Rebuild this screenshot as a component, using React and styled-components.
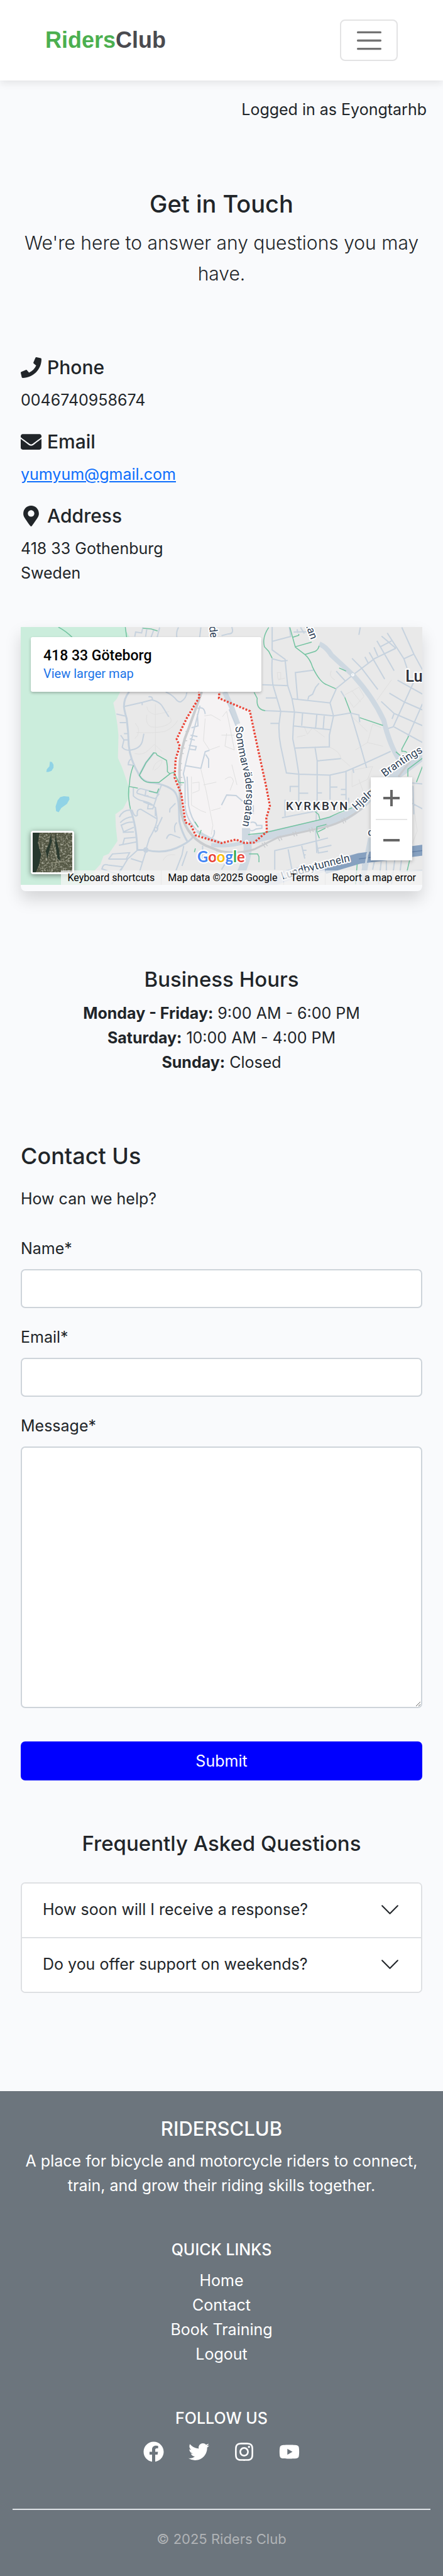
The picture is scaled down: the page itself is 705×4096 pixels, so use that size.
import React from "react";
import styled, { createGlobalStyle } from "styled-components";
import {
  FaPhone,
  FaEnvelope,
  FaMapMarkerAlt,
  FaFacebook,
  FaTwitter,
  FaInstagram,
  FaYoutube,
} from "react-icons/fa";

const GlobalStyle = createGlobalStyle`
  *, *::before, *::after { box-sizing: border-box; }
  body {
    margin: 0;
    background: #f9fafc;
    color: #212529;
    font-family: Inter, "Liberation Sans", sans-serif;
    font-size: 25px;
    line-height: 39px;
  }
  h1, h2, h3, h4, p, address, ul { margin: 0; padding: 0; font-style: normal; }
  button, input, textarea { font: inherit; color: inherit; }
`;

/* ---------- Header ---------- */

const Header = styled.header`
  display: flex;
  align-items: center;
  justify-content: space-between;
  height: 128px;
  padding: 0 72px 0 72px;
  background: #fff;
  box-shadow: 0 3px 13px rgba(0, 0, 0, 0.1);
`;

const Brand = styled.a`
  font-family: "Liberation Sans", Arial, sans-serif;
  font-size: 36px;
  line-height: 54px;
  font-weight: 700;
  color: #4a4a4f;
  text-decoration: none;

  span { color: #4caf50; }
`;

const MenuButton = styled.button`
  display: flex;
  align-items: center;
  justify-content: center;
  width: 92px;
  height: 66px;
  padding: 0;
  background: transparent;
  border: 2px solid #e3e3e4;
  border-radius: 8px;
`;

const LoginStatus = styled.p`
  padding: 27px 26px;
  text-align: right;
`;

/* ---------- Page sections ---------- */

const Main = styled.main`
  padding: 79px 33px 156px;
`;

const Centered = styled.section`
  text-align: center;
`;

const PageTitle = styled.h1`
  font-size: 38px;
  line-height: 49px;
  font-weight: 500;
  margin-bottom: 13px;
`;

const Lead = styled.p`
  font-size: 30px;
  line-height: 49px;
  font-weight: 300;
`;

const ContactDetails = styled.section`
  display: flex;
  flex-direction: column;
  gap: 27px;
  padding: 105px 0 66px;
`;

const DetailTitle = styled.h2`
  display: flex;
  align-items: center;
  gap: 9px;
  font-size: 30px;
  line-height: 39px;
  font-weight: 500;
  margin-bottom: 13px;

  svg { height: 33px; width: auto; }
`;

const MailLink = styled.a`
  color: #0d6efd;
  text-decoration: underline;
`;

const SectionTitle = styled.h2`
  font-size: 33px;
  line-height: 43px;
  font-weight: 500;
  margin-bottom: ${(p) => p.$gap}px;
`;

const Hours = styled(Centered)`
  padding: 119px 0 106px;

  strong { font-weight: 700; }
`;

/* ---------- Map ---------- */

const MapCard = styled.section`
  padding-bottom: 10px;
  border-radius: 0 0 8px 8px;
  background: #f9fafc;
  box-shadow: 0 13px 26px rgba(0, 0, 0, 0.15);
`;

const MapView = styled.div`
  position: relative;
  height: 410px;
  overflow: hidden;
  font-family: Roboto, "Liberation Sans", sans-serif;
`;

const MapSvg = styled.svg`
  display: block;
  width: 100%;
  height: 100%;

  .lines path { fill: none; vector-effect: non-scaling-stroke; }
  text {
    font-family: Roboto, sans-serif;
    fill: #2b3d55;
    stroke: #fff;
    stroke-width: 5px;
    stroke-linejoin: round;
    paint-order: stroke;
  }
`;

const PlaceCard = styled.div`
  position: absolute;
  top: 16px;
  left: 16px;
  width: 367px;
  height: 87px;
  padding: 16px 20px;
  background: #fff;
  border-radius: 3px;
  box-shadow: 0 2px 4px rgba(0, 0, 0, 0.25);
  color: #000;
`;

const PlaceName = styled.h3`
  font-size: 23px;
  line-height: 28px;
  font-weight: 500;
`;

const PlaceLink = styled.a`
  display: block;
  font-size: 20px;
  line-height: 28px;
  color: #1a73e8;
  text-decoration: none;
`;

const SatelliteButton = styled.button`
  position: absolute;
  left: 16px;
  bottom: 17px;
  width: 69px;
  height: 69px;
  padding: 0;
  border: 3px solid #fff;
  border-radius: 4px;
  overflow: hidden;
  box-shadow: 0 2px 8px rgba(0, 0, 0, 0.45);

  svg { display: block; width: 100%; height: 100%; }
`;

const ZoomControl = styled.div`
  position: absolute;
  right: 16px;
  bottom: 39px;
  width: 66px;
  padding: 0 8px;
  background: #fff;
  box-shadow: 0 2px 6px rgba(0, 0, 0, 0.25);
`;

const ZoomButton = styled.button`
  display: flex;
  align-items: center;
  justify-content: center;
  width: 100%;
  height: 66px;
  padding: 0;
  border: 0;
  background: transparent;

  & + & { border-top: 2px solid #e6e6e6; }
`;

const Attribution = styled.div`
  position: absolute;
  right: 0;
  bottom: 0;
  display: flex;
  gap: 1px;
  font-size: 16px;
  line-height: 23px;
  color: #000;
  white-space: nowrap;
`;

const attributionCell = `
  padding: 0 10px;
  background: rgba(245, 245, 245, 0.72);
  color: #000;
  font: inherit;
  border: 0;
  text-decoration: none;
`;
const AttributionButton = styled.button`${attributionCell}`;
const AttributionText = styled.span`${attributionCell}`;
const AttributionLink = styled.a`${attributionCell}`;

/* ---------- Form ---------- */

const FormTitle = styled.h2`
  font-size: 36px;
  line-height: 46px;
  font-weight: 500;
  margin-bottom: 26px;
`;

const Form = styled.form`
  display: flex;
  flex-direction: column;
  gap: 27px;
  padding-top: 40px;
`;

const Field = styled.div`
  display: flex;
  flex-direction: column;
  gap: 13px;
`;

const TextInput = styled.input`
  width: 100%;
  height: 62px;
  padding: 10px 20px;
  background: #fff;
  border: 2px solid #ced4da;
  border-radius: 7px;
`;

const MessageInput = styled.textarea`
  display: block;
  width: 100%;
  height: 416px;
  padding: 10px 20px;
  background: #fff;
  border: 2px solid #ced4da;
  border-radius: 7px;
  resize: vertical;
`;

const SubmitButton = styled.button`
  width: 100%;
  height: 62px;
  margin-top: 26px;
  padding: 0;
  color: #fff;
  background: #0000ff;
  border: 0;
  border-radius: 7px;
`;

/* ---------- FAQ ---------- */

const Faq = styled.section`
  padding-top: 79px;
  text-align: center;
`;

const Accordion = styled.div`
  border: 2px solid #dee0e3;
  border-radius: 7px;
  background: #fff;
  overflow: hidden;
`;

const AccordionButton = styled.button`
  display: flex;
  align-items: center;
  justify-content: space-between;
  width: 100%;
  padding: 22px 33px 24px;
  border: 0;
  background: #fff;
  line-height: 39px;
  text-align: left;

  & + & { border-top: 2px solid #dee0e3; }
`;

/* ---------- Footer ---------- */

const Footer = styled.footer`
  padding: 40px 20px 42px;
  background: #6c757d;
  color: #fff;
  text-align: center;
`;

const FooterBrand = styled.h2`
  font-size: 31px;
  line-height: 39px;
  font-weight: 500;
  margin-bottom: 13px;
`;

const FooterBlock = styled.section`
  padding-bottom: 67px;
`;

const FooterTitle = styled.h3`
  font-size: 25px;
  line-height: 31px;
  font-weight: 500;
  margin-bottom: 14px;
`;

const FooterLinks = styled.ul`
  list-style: none;

  a { color: inherit; text-decoration: none; }
`;

const SocialLinks = styled.div`
  display: flex;
  justify-content: center;
  gap: 39px;
  padding: 7px 0;

  a { display: flex; color: inherit; }
  svg { height: 33px; width: auto; }
`;

const Copyright = styled.p`
  padding-top: 30px;
  border-top: 2px solid #dee2e6;
  font-size: 22px;
  line-height: 33px;
  color: #b0b3b6;
`;

function MapDrawing() {
  return (
    <MapSvg viewBox="0 0 780 500" preserveAspectRatio="xMidYMid slice" aria-hidden="true">
      <defs>
        <path id="sommar" d="M417,193 Q421,240 434,285 Q444,340 428,395" />
        <path id="branting" d="M707,291 Q745,262 800,232" />
        <path id="hjalmar" d="M652,356 Q680,330 712,300" />
        <path id="lundby" d="M508,490 Q580,467 658,450" />
        <path id="topstreet" d="M549,-26 Q555,6 567,34" />
      </defs>
      <rect width="780" height="500" fill="#e9e9e9" />
      <path
        d="M345,110 L347,136 L323,176 L303,217 L309,231 L301,256 L299,292 L312,324 L320,379 L330,383 L340,404 L390,419 L418,412 L435,419 L453,418 L478,397 L477,370 L484,347 L476,306 L458,224 L445,163 L385,138 L387,110Z"
        fill="#f5f3f4"
      />
      <path
        d="M0,0 H203 L205,8 L212,20 L194,124 L187,139 L180,147 L184,165 L188,190 L190,210 L189,254 L197,272 L205,295 L213,320 L208,335 L199,352 L184,363 L185,388 L188,415 L182,424 L171,440 L161,444 L155,460 L144,472 L134,500 H0Z"
        fill="#cbeddc"
      />
      <path d="M57,261 L61,262 L64,267 L64,273 L60,279 L54,281 L50,281 L51,276 L56,270Z" fill="#90d3e6" />
      <path d="M84,328 L94,329 L95,334 L90,343 L79,351 L74,359 L69,357 L68,348 L72,336 L77,330Z" fill="#90d3e6" />

      <g className="lines" transform="matrix(0.33333 0 0 0.35714 -40 -26)">
        <g stroke="#e0e0e0" strokeWidth="1">
          <path d="M788,595 Q830,640 785,680 M855,505 Q860,540 905,548 L985,532 M905,490 V750 M855,550 Q845,600 880,615 Q950,625 995,590 Q1005,570 970,545 M795,645 Q900,650 960,640 Q1010,620 1035,580 M785,760 Q830,770 860,745 L900,710 L945,750 M890,850 Q900,800 945,795 Q940,830 900,850" />
          <path d="M1190,555 L1230,550 L1285,580 M1195,570 L1185,690 L1220,740 L1280,720 M1115,885 V1040 M1120,920 L1160,915 V960 L1120,975 M1170,845 L1200,960 L1240,1150 L1230,1200 M1115,1040 L1170,1070 L1200,1080 M1185,930 L1260,915 M1230,1070 L1285,1055 M950,1340 Q970,1300 1020,1310" />
        </g>
        <g stroke="#c6d2de" strokeWidth="2">
          <path d="M785,125 L790,100 L825,105 L832,75 M855,85 L848,125 M895,90 L880,128 M930,75 L915,130 M1040,75 Q1025,95 1030,130 M1170,75 L1163,128" />
          <path d="M752,425 Q722,460 722,505 Q725,530 738,570 Q748,640 750,715 Q757,790 808,872 Q830,915 900,920 Q970,930 1010,960 Q1040,985 1042,1060 L1045,1130 Q1060,1190 1090,1235" strokeWidth="3" />
          <path d="M722,505 L830,482 L885,468 Q935,480 950,510 L983,560 M865,452 Q890,448 888,468 M828,482 V497 M965,425 Q1000,440 1020,460 Q1040,485 1055,478 Q1085,460 1088,428 M678,545 L728,556 M697,592 H735 M722,652 H745 M703,660 L722,686 H750 M722,686 L712,725 Q725,742 753,742 M753,742 Q820,735 830,690 L838,652 M770,788 Q750,790 747,820 L775,823" />
          <path d="M815,870 L850,810 L897,755" strokeWidth="3" />
          <path d="M777,945 V990 Q800,1012 835,1018 Q890,1030 905,1055 V1100 M797,975 Q800,950 820,950 L880,965 L925,980 L905,1005 Q850,990 797,975 M850,960 L845,990 L865,990 M940,932 L915,990 L890,1060 L860,1060 L865,1030 M835,1022 L885,1040" />
          <path d="M695,1105 Q720,1060 770,1068 Q785,1110 800,1095 Q795,1060 820,1062 L915,1115 M700,1135 Q730,1105 775,1103 M705,1145 L720,1185 L780,1160 M705,1150 Q740,1130 775,1132 M715,1188 L780,1185 M693,1258 L795,1240 M715,1255 L725,1220 L790,1215" />
          <path d="M760,1065 Q795,1150 800,1283 H850 Q960,1310 1060,1258 Q1110,1235 1130,1205" strokeWidth="3" />
          <path d="M945,1105 L915,1165 Q890,1150 905,1185 Q925,1175 915,1150 M915,1110 Q915,1150 870,1220 L852,1275 M915,1115 L905,1050 M1022,1030 L990,1060 L988,1080 M1030,1135 Q1010,1150 1020,1188 M970,1222 Q980,1195 1000,1200 L1050,1218" />
          <path d="M632,1333 L655,1305 L755,1298 L735,1333 L632,1333 M595,1385 Q600,1355 630,1365 L715,1375 L695,1400 M590,1385 L700,1420 M745,1330 L700,1400 L650,1470 M850,1290 L815,1395 L790,1470 M800,1285 L740,1335 M762,1330 L830,1350 M1070,1262 L1060,1310 L1025,1395 M1090,1290 L1060,1370 M1180,1260 V1340 L1240,1300" />
          <path d="M850,1273 A10,10 0 1 1 849,1273" strokeWidth="3" />
          <path d="M1165,500 L1090,780 L1068,870 L1078,910 V1035 M1090,885 L1098,1040 Q1110,1110 1155,1160 M1150,515 Q1190,500 1195,545 M1150,545 L1153,610 L1115,620 M1110,660 L1150,668 M1105,680 L1135,687 M1100,715 L1143,722 L1138,740 L1100,735 M1075,825 L1170,840 L1195,750 L1220,742 M1198,765 L1215,790 V838 M1078,1040 Q1080,1110 1145,1175 M1247,1175 Q1255,1200 1230,1225" />
          <path d="M1145,1180 Q1220,1225 1300,1250" strokeWidth="5" stroke="#ced8e1" />
        </g>
        <path d="M1175,425 L1100,620 Q1045,740 1045,860 L1050,1050 Q1070,1200 1200,1260 L1295,1295" stroke="#c9cccf" strokeWidth="4" />
        <path d="M1045,815 H1060 M1040,850 H1060 M1040,890 H1062 M1042,930 H1062 M1050,760 H1070 M1060,730 H1078 M1072,690 H1090 M1080,640 H1100" stroke="#c9cccf" strokeWidth="1.5" />
        <g stroke="#72c3a0" strokeWidth="1.5">
          <path d="M340,73 Q385,95 422,130 M730,73 L738,130 M832,80 L880,83 L918,94" />
          <path d="M812,878 Q835,915 870,917 L925,917 L990,870 L975,858 V830 L970,797 L915,768 L908,757 L895,756 L850,810Z" />
          <path d="M990,868 L1012,862 L1025,885 L1042,918 H1072 M777,824 Q755,880 755,920 Q740,980 760,1062 M750,938 L803,948 M868,964 L915,973 L925,950 M1135,1130 L1155,1160 M1172,1175 L1160,1205 M1138,1275 L1132,1295" />
        </g>
      </g>

      <g className="lines" transform="matrix(0.33333 0 0 0.35714 390 -26)">
        <g stroke="#dfdfdf" strokeWidth="1">
          <path d="M325,320 H345 V355 H328Z M330,360 L370,350 M480,610 L500,655 L530,620 L600,670 M440,670 L490,660 M630,725 Q690,750 695,785 L750,830 M720,440 L800,400 L830,450 L770,510 L740,470 M760,420 L810,480 M760,560 L850,640 M780,740 L850,700 L940,720 M640,310 Q620,340 660,360 M850,700 L880,600 L930,620 M990,360 L905,470 M760,850 L880,830 L850,900 L760,940Z M800,900 L830,980 M1110,1000 L1140,1180 L1110,1250" />
          <path d="M5,560 L30,530 L50,620 L75,740 L20,720 L30,650 M0,660 L75,660 M20,900 Q60,870 70,910 L50,960 M60,820 L90,930" />
        </g>
        <g stroke="#c6d2de" strokeWidth="2">
          <path d="M60,73 Q75,110 40,110 L0,120 M295,73 V197 L370,248 L385,390 L410,460 L425,535 M298,150 L403,124 L395,73 M295,245 Q290,330 300,390 L345,530 L335,600 Q332,660 345,720 L378,865 L450,872 M295,245 L350,258 L385,255 M238,386 L390,391 M258,458 H320 M285,596 H335 M255,527 L345,530 L425,535 L652,555 L750,540 L800,550 L805,590" />
          <path d="M425,535 L418,610 L415,680 L430,750 L450,870 V1060 M418,610 L632,630 M408,462 L632,485 L670,405 L765,333 M632,485 L652,555 L628,660 V723 L430,730 M472,540 L467,608 M555,548 L548,622 M598,555 L592,625 M443,462 L430,320 L538,307 M503,467 L508,450 L530,438 L548,400 L568,378 M545,730 L557,800 V1000 L548,1180 L555,1300 M555,800 L695,787 M450,872 L630,877 L720,858 L840,810 L985,748 M632,877 V1010 M725,858 V1010 M450,938 H400 V968 M450,975 H505 M555,973 H585 M632,942 H675 M695,955 H722 M695,983 H722" />
          <path d="M752,540 L800,690 L845,838 M765,843 L770,865 M370,1010 V1100 M352,1108 L590,1065 M740,1000 V1030" />
          <path d="M765,333 L890,245 L1015,188 M760,243 L815,295 L910,412 M860,210 L950,355 M888,183 L910,230 M835,235 L855,270 M905,148 L1005,310 M932,122 L1015,188 M965,105 L1062,245 L1120,220 L1050,75 M925,180 L990,148 M1062,245 L1080,295 M1120,220 L1170,305 M808,75 L800,115 M668,312 L720,365 M695,420 L718,455" />
          <path d="M1025,362 L1170,437 M977,432 L1065,480 L1170,523 M930,477 L1005,542 L1170,608 M1005,615 L1170,700 M1120,370 L1000,615 L965,625 M1170,490 L1085,670 M1005,542 L993,572 M1110,920 L1170,925 M1115,935 L1120,1090 M1110,1030 L1170,1060" />
          <path d="M0,1040 L30,985 L85,988 L125,1020 M165,1135 Q200,1125 205,1150 L235,1150 V1165 L200,1170 Q180,1185 165,1175 M185,1040 V1090 M310,1390 V1287 L465,1255 L620,1218 M388,1280 L410,1390 M467,1260 L485,1330 M470,1285 H495 M478,1310 H490 M550,1230 L565,1300 M560,1275 L640,1258 M560,1300 L620,1290 M440,85 L445,105 M460,75 L482,108 M420,100 L500,98" />
          <path d="M880,1390 L890,1345 L960,1340 V1470 M930,1345 L915,1470 M1010,1330 L990,1470 M1050,1320 L1040,1400 L1170,1395 M880,1420 L1060,1440 M820,1360 L850,1470 M0,1390 L60,1300" />
        </g>
        <g stroke="#ced8e1">
          <path d="M570,165 Q610,180 640,225 L765,333 Q880,450 945,580 Q980,720 1040,800" strokeWidth="8" />
          <path d="M18,425 L60,510 L95,600" strokeWidth="8" />
          <path d="M145,1235 L270,1205 L560,1145 L720,1100 Q830,1040 900,950 L1060,850 L1180,765" strokeWidth="14" />
          <path d="M143,1165 V1235 Q180,1290 80,1473" strokeWidth="13" />
          <path d="M870,1220 L835,1380 L815,1473" strokeWidth="9" />
          <path d="M-60,1255 Q40,1270 145,1238" strokeWidth="6" />
        </g>
        <path d="M45,520 L90,620" stroke="#c6d2de" strokeWidth="2" />
        <path d="M147,1230 a8,8 0 1 1 -1,0 M765,326 a6,6 0 1 1 -1,0" stroke="#fff" strokeWidth="1.5" />
        <path d="M-30,1285 Q90,1310 190,1280 L330,1215 L600,1160 Q730,1130 840,1040 M1030,885 L1100,800" stroke="#c9cbce" strokeWidth="3" />
        <path d="M235,1245 L255,1270 M248,1240 L268,1262 M325,1210 L340,1235 M340,1205 L352,1230 M415,1185 L425,1210 M430,1182 L440,1207 M510,1165 L518,1190 M525,1160 L535,1186 M610,1140 L620,1165 M700,1115 L712,1140 M712,1108 L724,1133" stroke="#c9cbce" strokeWidth="1.5" />
        <path d="M205,1480 L390,1420 L800,1330 L1180,1283" stroke="#cfd8e6" strokeWidth="17" />
        <path d="M600,1385 L800,1330 L1180,1283" stroke="#87a1c0" strokeWidth="17" />
        <path d="M800,1332 L1180,1285" stroke="#6885ab" strokeWidth="1.5" />
        <path d="M870,1220 L835,1380 M850,1300 L840,1360" stroke="#ced8e1" strokeWidth="3" strokeDasharray="6 4" />
        <g stroke="#72c3a0" strokeWidth="1.5">
          <path d="M275,75 Q235,130 250,180 L275,205 L295,242 M190,428 L208,460 Q200,520 255,527 M398,75 L430,182 L485,222 Q515,245 530,290 Q570,370 610,385 L665,408 M415,128 L450,118 V110 M430,180 L525,155 M485,222 L545,205 Q565,195 568,175 M685,295 L725,312 M718,455 L752,538 M805,565 L940,607 M1090,665 L1050,735 V748 Q1070,745 1080,755 M1015,750 L1040,770" />
          <path d="M155,1200 L250,1190 L560,1122 L630,1105 Q680,1080 760,1055 M545,1075 L565,1090 L572,1115 M610,1145 L555,1158 V1185 L570,1220 M560,1185 L605,1165 M160,1305 H210 L218,1320 V1350 M1170,785 L1085,845 V885 M1170,830 L1135,915 M790,1360 L780,1470 M1095,1340 L1080,1400" />
        </g>
      </g>

      <path
        d="M345,110 L347,136 L323,176 L303,217 L309,231 L301,256 L299,292 L312,324 L320,379 L330,383 L340,404 L390,419 L418,412 L435,419 L453,418 L478,397 L477,370 L484,347 L476,306 L458,224 L445,163 L385,138 L387,110"
        fill="none"
        stroke="#ea4335"
        strokeWidth="4"
        strokeDasharray="3.5 3"
      />

      <g fontSize="21">
        <text><textPath href="#sommar">Sommarvädersgatan</textPath></text>
        <text><textPath href="#branting">Brantings</textPath></text>
        <text><textPath href="#hjalmar">Hjalm</textPath></text>
        <text><textPath href="#lundby">Lundbytunneln</textPath></text>
        <text><textPath href="#topstreet">gatan</textPath></text>
        <text transform="translate(366 -1) rotate(83)">de</text>
        <text x="674" y="405">o</text>
      </g>
      <text x="515" y="355" fontSize="23" fontWeight="500" letterSpacing="3" style={{ fill: "#2c3038" }}>KYRKBYN</text>
      <text x="747" y="106" fontSize="31" fontWeight="500" style={{ fill: "#2c3038" }}>Lu</text>
      <text x="343" y="456" style={{ fontFamily: "Lato, sans-serif", fontWeight: 700, fontSize: 29 }}>
        <tspan fill="#4285f4" style={{ fill: "#4285f4" }}>G</tspan>
        <tspan style={{ fill: "#ea4335" }}>o</tspan>
        <tspan style={{ fill: "#fbbc04" }}>o</tspan>
        <tspan style={{ fill: "#4285f4" }}>g</tspan>
        <tspan style={{ fill: "#34a853" }}>l</tspan>
        <tspan style={{ fill: "#ea4335" }}>e</tspan>
      </text>
    </MapSvg>
  );
}

function SatelliteThumb() {
  return (
    <svg viewBox="0 0 76 76" aria-hidden="true">
      <defs>
        <filter id="terrain" x="0" y="0" width="100%" height="100%">
          <feTurbulence type="fractalNoise" baseFrequency="0.28" numOctaves="3" seed="8" />
          <feColorMatrix values="0 0 0 0 0.75  0 0 0 0 0.75  0 0 0 0 0.65  2.4 0 0 0 -1.1" />
        </filter>
      </defs>
      <rect width="76" height="76" fill="#555845" />
      <rect width="76" height="76" filter="url(#terrain)" opacity="0.75" />
      <path d="M0,0 H13 L10,20 L16,42 L12,62 L6,76 H0Z" fill="#26382e" />
      <path d="M35,0 L32,20 L25,35 L28,50 L33,30 L37,16 L34,0Z M44,0 L43,20 L48,50 L53,54 L50,30 L46,16Z" fill="#2a392e" />
      <path d="M38,16 L46,50 L44,64 L34,76 M36,58 L60,56 L76,46 M60,25 L76,14" stroke="#a5a590" strokeWidth="1" fill="none" />
    </svg>
  );
}

function Chevron() {
  return (
    <svg width="33" height="33" viewBox="0 0 16 16" fill="#212529" aria-hidden="true">
      <path d="M1.646 4.646a.5.5 0 0 1 .708 0L8 10.293l5.646-5.647a.5.5 0 0 1 .708.708l-6 6a.5.5 0 0 1-.708 0l-6-6a.5.5 0 0 1 0-.708z" />
    </svg>
  );
}

const questions = ["How soon will I receive a response?", "Do you offer support on weekends?"];
const links = ["Home", "Contact", "Book Training", "Logout"];
const socials = [
  ["Facebook", FaFacebook],
  ["Twitter", FaTwitter],
  ["Instagram", FaInstagram],
  ["YouTube", FaYoutube],
];

export default function App() {
  return (
    <>
      <GlobalStyle />
      <Header>
        <Brand href="#home"><span>Riders</span>Club</Brand>
        <MenuButton type="button" aria-label="Toggle navigation">
          <svg width="49" height="49" viewBox="0 0 30 30" aria-hidden="true">
            <path d="M4 7h22M4 15h22M4 23h22" stroke="#737373" strokeWidth="2" strokeLinecap="round" />
          </svg>
        </MenuButton>
      </Header>
      <LoginStatus>Logged in as Eyongtarhb</LoginStatus>

      <Main>
        <Centered>
          <PageTitle>Get in Touch</PageTitle>
          <Lead>We're here to answer any questions you may have.</Lead>
        </Centered>

        <ContactDetails>
          <div>
            <DetailTitle><FaPhone />Phone</DetailTitle>
            <p>0046740958674</p>
          </div>
          <div>
            <DetailTitle><FaEnvelope />Email</DetailTitle>
            <p><MailLink href="mailto:yumyum@gmail.com">yumyum@gmail.com</MailLink></p>
          </div>
          <div>
            <DetailTitle><FaMapMarkerAlt />Address</DetailTitle>
            <address>418 33 Gothenburg<br />Sweden</address>
          </div>
        </ContactDetails>

        <MapCard>
          <MapView>
            <MapDrawing />
            <PlaceCard>
              <PlaceName>418 33 Göteborg</PlaceName>
              <PlaceLink href="#map">View larger map</PlaceLink>
            </PlaceCard>
            <SatelliteButton type="button" aria-label="Show satellite imagery"><SatelliteThumb /></SatelliteButton>
            <ZoomControl>
              <ZoomButton type="button" aria-label="Zoom in">
                <svg width="28" height="28" viewBox="0 0 28 28"><path d="M1 14H27M14 1V27" stroke="#666" strokeWidth="4" /></svg>
              </ZoomButton>
              <ZoomButton type="button" aria-label="Zoom out">
                <svg width="28" height="28" viewBox="0 0 28 28"><path d="M1 14H27" stroke="#666" strokeWidth="4" /></svg>
              </ZoomButton>
            </ZoomControl>
            <Attribution>
              <AttributionButton type="button">Keyboard shortcuts</AttributionButton>
              <AttributionText>Map data ©2025 Google</AttributionText>
              <AttributionLink href="#terms">Terms</AttributionLink>
              <AttributionLink href="#report">Report a map error</AttributionLink>
            </Attribution>
          </MapView>
        </MapCard>

        <Hours>
          <SectionTitle $gap={13}>Business Hours</SectionTitle>
          <p><strong>Monday - Friday:</strong> 9:00 AM - 6:00 PM</p>
          <p><strong>Saturday:</strong> 10:00 AM - 4:00 PM</p>
          <p><strong>Sunday:</strong> Closed</p>
        </Hours>

        <section>
          <FormTitle>Contact Us</FormTitle>
          <p>How can we help?</p>
          <Form>
            <Field>
              <label htmlFor="name">Name*</label>
              <TextInput id="name" type="text" />
            </Field>
            <Field>
              <label htmlFor="email">Email*</label>
              <TextInput id="email" type="email" />
            </Field>
            <Field>
              <label htmlFor="message">Message*</label>
              <MessageInput id="message" />
            </Field>
            <SubmitButton type="submit">Submit</SubmitButton>
          </Form>
        </section>

        <Faq>
          <SectionTitle $gap={40}>Frequently Asked Questions</SectionTitle>
          <Accordion>
            {questions.map((question) => (
              <AccordionButton key={question} type="button" aria-expanded="false">
                {question}
                <Chevron />
              </AccordionButton>
            ))}
          </Accordion>
        </Faq>
      </Main>

      <Footer>
        <FooterBlock>
          <FooterBrand>RIDERSCLUB</FooterBrand>
          <p>A place for bicycle and motorcycle riders to connect, train, and grow their riding skills together.</p>
        </FooterBlock>
        <FooterBlock>
          <FooterTitle>QUICK LINKS</FooterTitle>
          <FooterLinks>
            {links.map((link) => (
              <li key={link}><a href={"#" + link.toLowerCase().replace(" ", "-")}>{link}</a></li>
            ))}
          </FooterLinks>
        </FooterBlock>
        <FooterBlock>
          <FooterTitle>FOLLOW US</FooterTitle>
          <SocialLinks>
            {socials.map(([name, Icon]) => (
              <a key={name} href={"#" + name.toLowerCase()} aria-label={name}><Icon /></a>
            ))}
          </SocialLinks>
        </FooterBlock>
        <Copyright>© 2025 Riders Club</Copyright>
      </Footer>
    </>
  );
}
